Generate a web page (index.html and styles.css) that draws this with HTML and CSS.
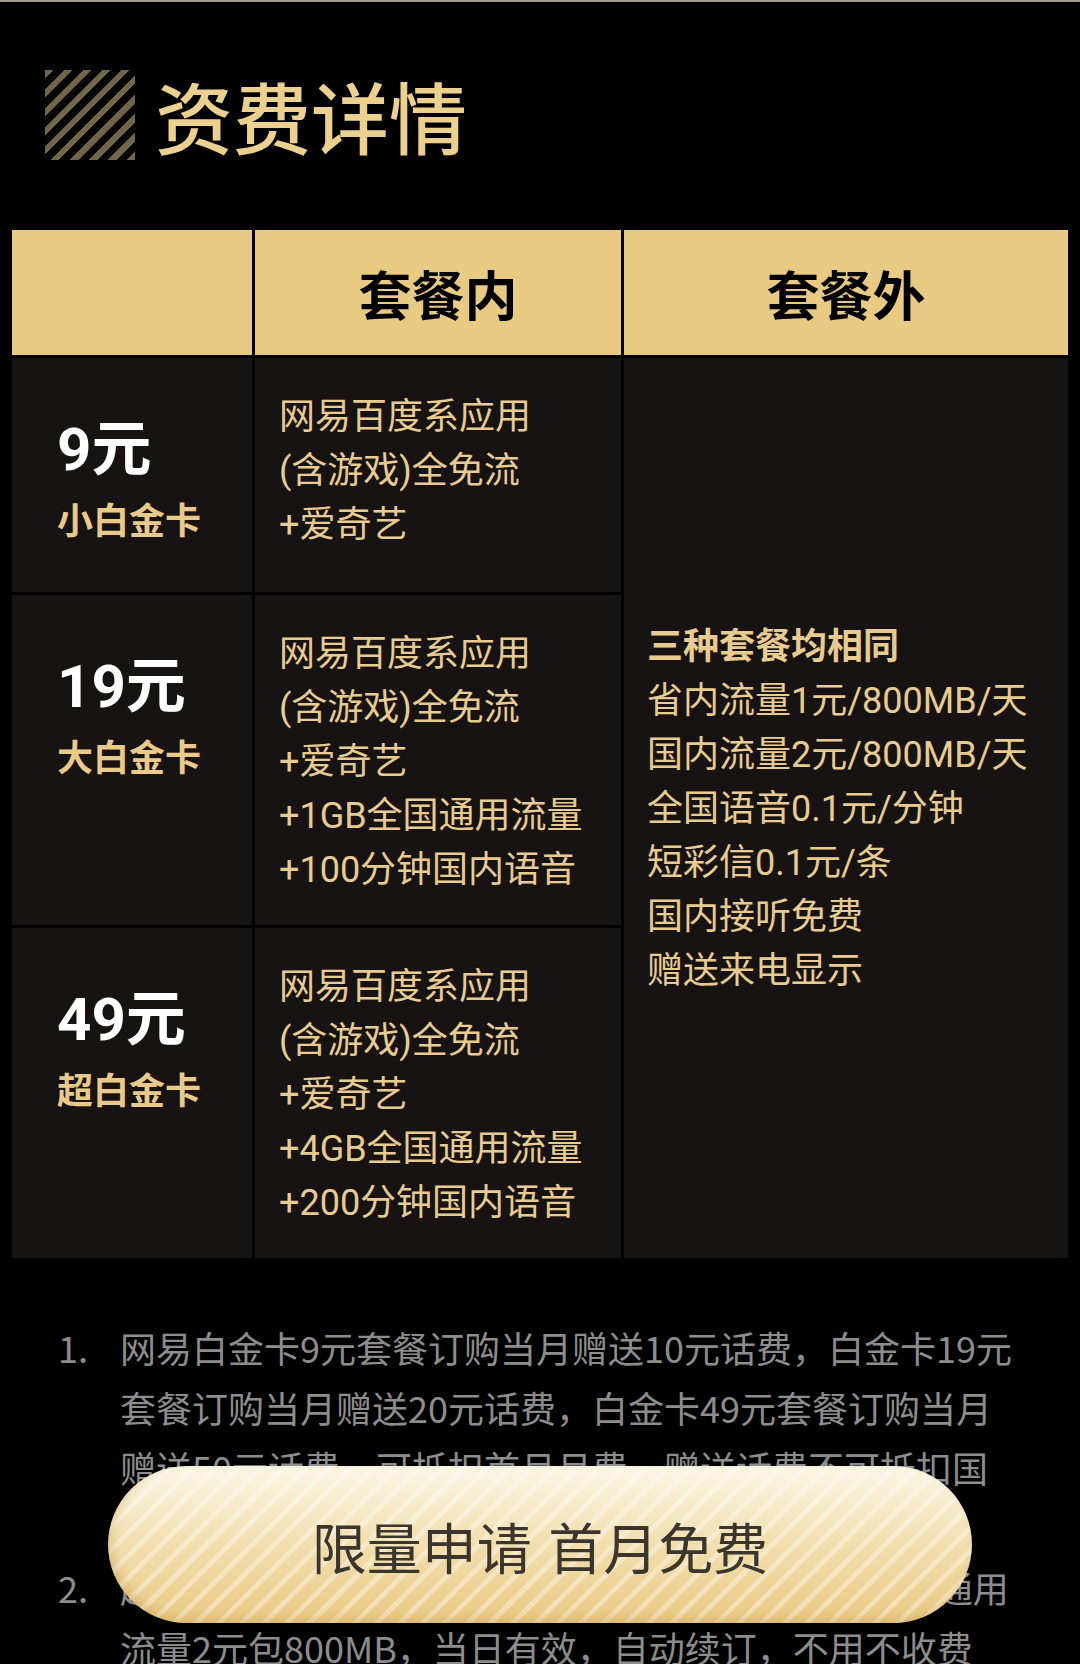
FILE: index.html
```html
<!DOCTYPE html>
<html lang="zh-CN">
<head>
<meta charset="utf-8">
<title>资费详情</title>
<link rel="stylesheet" href="styles.css">
</head>
<body>
<div class="page">
  <div class="title">
    <div class="title-mark"></div>
    <h1 class="title-text">资费详情</h1>
  </div>

  <div class="table">
    <div class="head"></div>
    <div class="head">套餐内</div>
    <div class="head">套餐外</div>

    <div class="plan">
      <div class="price">9元</div>
      <div class="name">小白金卡</div>
    </div>
    <div class="inside">
      <div>网易百度系应用</div>
      <div>(含游戏)全免流</div>
      <div>+爱奇艺</div>
    </div>
    <div class="outside">
      <div class="strong">三种套餐均相同</div>
      <div>省内流量1元/800MB/天</div>
      <div>国内流量2元/800MB/天</div>
      <div>全国语音0.1元/分钟</div>
      <div>短彩信0.1元/条</div>
      <div>国内接听免费</div>
      <div>赠送来电显示</div>
    </div>

    <div class="plan">
      <div class="price">19元</div>
      <div class="name">大白金卡</div>
    </div>
    <div class="inside">
      <div>网易百度系应用</div>
      <div>(含游戏)全免流</div>
      <div>+爱奇艺</div>
      <div>+1GB全国通用流量</div>
      <div>+100分钟国内语音</div>
    </div>

    <div class="plan">
      <div class="price">49元</div>
      <div class="name">超白金卡</div>
    </div>
    <div class="inside">
      <div>网易百度系应用</div>
      <div>(含游戏)全免流</div>
      <div>+爱奇艺</div>
      <div>+4GB全国通用流量</div>
      <div>+200分钟国内语音</div>
    </div>
  </div>

  <ol class="notes">
    <li><span class="num">1.</span><span class="txt">网易白金卡9元套餐订购当月赠送10元话费，白金卡19元套餐订购当月赠送20元话费，白金卡49元套餐订购当月赠送50元话费，可抵扣首月月费，赠送话费不可抵扣国内外漫游及增值业务费用。</span></li>
    <li><span class="num">2.</span><span class="txt">超出套餐流量后，省内流量1元包800MB计费，国内通用流量2元包800MB，当日有效，自动续订，不用不收费</span></li>
  </ol>
</div>

<a class="apply" href="#">限量申请 首月免费</a>
</body>
</html>
```

FILE: styles.css
```css
* {
  box-sizing: border-box;
}

html,
body {
  margin: 0;
  padding: 0;
}

body {
  background: #000;
  font-family: "Noto Sans CJK SC", "Noto Sans", sans-serif;
  border-top: 2px solid #a49b86;
}

.page {
  padding-bottom: 200px;
}

.title {
  display: flex;
  align-items: center;
  height: 90px;
  margin: 68px 0 70px 45px;
}

.title-mark {
  width: 90px;
  height: 90px;
  background: repeating-linear-gradient(135deg, #70674b 0 6px, #050505 6px 13.5px);
}

.title-text {
  margin: 0 0 0 20px;
  font-size: 78px;
  font-weight: 500;
  line-height: 1;
  color: #ecd08e;
}

.table {
  display: grid;
  margin: 0 12px;
  grid-template-columns: 240px 366px 444px;
  grid-template-rows: 125px 234px 330px 330px;
  gap: 3px;
}

.head {
  background: #e9ca82;
  color: #000;
  font-size: 53px;
  font-weight: 700;
  display: flex;
  align-items: center;
  justify-content: center;
}

.plan,
.inside,
.outside {
  background: #171313;
  font-family: "Roboto", "Noto Sans CJK SC", sans-serif;
}

.plan {
  padding: 56px 0 0 45px;
}

.price {
  font-size: 60px;
  font-weight: 700;
  line-height: 72px;
  color: #fff;
}

.name {
  margin-top: 14px;
  font-size: 36px;
  font-weight: 700;
  line-height: 44px;
  color: #e9ca88;
}

.inside {
  padding: 32px 0 0 24px;
  font-size: 36px;
  line-height: 54px;
  color: #e8cc8f;
}

.outside {
  grid-column: 3;
  grid-row: 2 / span 3;
  display: flex;
  flex-direction: column;
  justify-content: center;
  padding: 2px 0 0 23px;
  font-size: 36px;
  line-height: 54px;
  color: #e8cc8f;
}

.outside .strong {
  font-weight: 700;
}

.notes {
  list-style: none;
  margin: 59px 0 0;
  padding: 0 0 0 58px;
  font-size: 36px;
  line-height: 60px;
  color: #8d8d8d;
}

.notes li {
  display: flex;
}

.num {
  flex: 0 0 62px;
}

.txt {
  width: 900px;
}

.apply {
  position: fixed;
  left: 108px;
  bottom: 41px;
  width: 864px;
  height: 157px;
  border-radius: 79px;
  display: flex;
  align-items: center;
  justify-content: center;
  text-decoration: none;
  font-size: 55px;
  word-spacing: 4px;
  color: #3a362e;
  background:
    repeating-linear-gradient(135deg, rgba(255, 255, 255, 0) 0 11px, rgba(255, 255, 255, 0.35) 11px 16px),
    linear-gradient(180deg, #fbf6e6 0%, #f3e1b3 45%, #e9c982 100%);
  box-shadow: inset 4px -4px 10px rgba(190, 150, 70, 0.35);
}
```
